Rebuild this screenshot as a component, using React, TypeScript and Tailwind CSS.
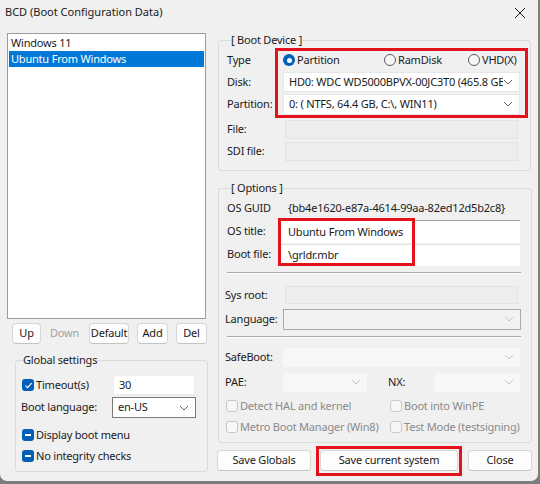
import React from 'react';

// BCD dialog (Windows 11 look)

const Chevron: React.FC<{ light?: boolean }> = ({ light }) => (
  <svg width="10" height="6" viewBox="0 0 10 6" className="shrink-0">
    <path d="M1 1 L5 5 L9 1" fill="none" stroke={light ? '#c4c4c4' : '#606060'} strokeWidth="1" />
  </svg>
);

const CheckBox: React.FC<{ state: 'checked' | 'mixed' | 'off' }> = ({ state }) => {
  if (state === 'off') {
    return <span className="w-[12px] h-[12px] rounded-[3px] border border-[#c8c8c8] bg-[#f7f7f7] shrink-0" />;
  }
  return (
    <span className="w-[12px] h-[12px] rounded-[3px] bg-[#005fb8] flex items-center justify-center shrink-0">
      {state === 'checked' ? (
        <svg width="9" height="9" viewBox="0 0 9 9">
          <path d="M1.5 4.6 L3.6 6.6 L7.6 2.2" fill="none" stroke="#fff" strokeWidth="1.2" />
        </svg>
      ) : (
        <span className="w-[6px] h-[1.5px] bg-white" />
      )}
    </span>
  );
};

const Radio: React.FC<{ on?: boolean; label: string; className?: string }> = ({ on, label, className }) => (
  <div className={`flex items-center gap-[2px] ${className ?? ''}`}>
    {on ? (
      <span className="w-[12px] h-[12px] rounded-full bg-[#005fb8] flex items-center justify-center">
        <span className="w-[5px] h-[5px] rounded-full bg-white" />
      </span>
    ) : (
      <span className="w-[12px] h-[12px] rounded-full border border-[#5c5c5c] bg-[#f6f6f6]" />
    )}
    <span>{label}</span>
  </div>
);

const Btn: React.FC<{ children: React.ReactNode; className?: string; disabled?: boolean }> = ({ children, className, disabled }) => (
  <div
    className={`h-[21px] flex items-center justify-center rounded-[4px] ${
      disabled ? 'text-[#a3a3a3]' : 'bg-[#fdfdfd] border border-[#d6d6d6] border-b-[#c4c4c4]'
    } ${className ?? ''}`}
  >
    {children}
  </div>
);

const Combo: React.FC<{ text?: string; className?: string; variant?: 'white' | 'dark' | 'disabled' | 'framed' }> = ({
  text,
  className,
  variant = 'white',
}) => {
  const look =
    variant === 'white'
      ? 'bg-white border border-[#e6e6e6]'
      : variant === 'dark'
      ? 'bg-white border border-[#7a7a7a]'
      : variant === 'framed'
      ? 'bg-[#f2f2f2] border border-[#a8a8a8]'
      : 'bg-[#f7f7f7]';
  return (
    <div className={`flex items-center pl-[5px] pr-[6px] overflow-hidden ${look} ${className ?? ''}`}>
      <span className="flex-1 whitespace-nowrap overflow-hidden">{text}</span>
      <Chevron light={variant === 'disabled' || variant === 'framed'} />
    </div>
  );
};

const DisabledEdit: React.FC<{ className?: string }> = ({ className }) => (
  <div className={`bg-[#ededed] border border-[#e3e3e3] ${className ?? ''}`} />
);

const Row: React.FC<{ label: string; children: React.ReactNode; className?: string }> = ({ label, children, className }) => (
  <div className={`flex items-center ${className ?? ''}`}>
    <span className="w-[56px] shrink-0">{label}</span>
    {children}
  </div>
);

export default function App() {
  return (
    <div
      className="w-[540px] h-[484px] bg-[#7d7d7d] text-[11px] tracking-[-0.2px] text-[#1a1a1a] overflow-hidden relative whitespace-nowrap"
      style={{ fontFamily: '"Noto Sans", "Open Sans", sans-serif' }}
    >
      <div className="w-[538px] h-[481px] bg-[#f0f0f0] rounded-b-[7px] flex flex-col">
        {/* title bar */}
        <div className="h-[25px] flex items-center justify-between pl-[5px] pr-[12px]">
          <span className="tracking-normal">BCD (Boot Configuration Data)</span>
          <svg width="12" height="12" viewBox="0 0 12 12">
            <path d="M1 1 L11 11 M11 1 L1 11" stroke="#1a1a1a" strokeWidth="1" />
          </svg>
        </div>

        <div className="flex pl-[7px]">
          {/* left column */}
          <div className="w-[201px] flex flex-col">
            <div className="mt-[8px] h-[286px] w-[199px] bg-white border border-[#9c9c9c] pt-[1px] px-[1px]">
              <div className="h-[16px] flex items-center pl-[2px]">Windows 11</div>
              <div className="h-[16px] flex items-center pl-[2px] bg-[#0078d7] text-white">Ubuntu From Windows</div>
            </div>
            <div className="mt-[4px] flex items-center pl-[5px]">
              <Btn className="w-[29px]">Up</Btn>
              <Btn className="w-[29px] ml-[9px]" disabled>
                Down
              </Btn>
              <Btn className="w-[40px] ml-[10px]">Default</Btn>
              <Btn className="w-[31px] ml-[8px]">Add</Btn>
              <Btn className="w-[31px] ml-[8px]">Del</Btn>
            </div>

            <fieldset className="mt-[8px] ml-[8px] w-[193px] h-[120px] border border-[#dadada] rounded-[3px] px-[6px]">
              <legend className="ml-[1px] leading-[16px]">Global settings</legend>
              <div className="mt-[7px] h-[20px] flex items-center">
                <div className="w-[91px] flex items-center gap-[2px]">
                  <CheckBox state="checked" />
                  <span>Timeout(s)</span>
                </div>
                <div className="w-[82px] h-[20px] bg-white border border-[#ececec] flex items-center pl-[5px]">30</div>
              </div>
              <div className="mt-[2px] h-[21px] flex items-center">
                <span className="w-[91px] -ml-[1px]">Boot language:</span>
                <Combo text="en-US" variant="dark" className="w-[84px] h-[21px]" />
              </div>
              <div className="mt-[7px] h-[20px] flex items-center gap-[2px]">
                <CheckBox state="mixed" />
                <span>Display boot menu</span>
              </div>
              <div className="mt-[1px] h-[20px] flex items-center gap-[2px]">
                <CheckBox state="mixed" />
                <span>No integrity checks</span>
              </div>
            </fieldset>
          </div>

          {/* right column */}
          <div className="ml-[9px] w-[315px] flex flex-col pt-[7px]">
            <fieldset className="ml-[1px] w-[313px] h-[139px] border border-[#dadada] rounded-[3px] pl-[8px] pr-[10px]">
              <legend className="ml-[4px] leading-[16px]">[ Boot Device ]</legend>
              <Row label="Type" className="h-[22px] mt-[1px]">
                <Radio on label="Partition" className="w-[101px]" />
                <Radio label="RamDisk" className="w-[84px]" />
                <Radio label="VHD(X)" />
              </Row>
              <Row label="Disk:" className="h-[22px]">
                <Combo text="HD0: WDC WD5000BPVX-00JC3T0 (465.8 GB, (" className="w-[237px] h-[20px]" />
              </Row>
              <Row label="Partition:" className="h-[22px]">
                <Combo text="0: ( NTFS,  64.4 GB, C:\, WIN11)" className="w-[237px] h-[21px]" />
              </Row>
              <Row label="File:" className="h-[22px] mt-[3px]">
                <DisabledEdit className="ml-[2px] w-[233px] h-[19px]" />
              </Row>
              <Row label="SDI file:" className="h-[22px]">
                <DisabledEdit className="ml-[2px] w-[233px] h-[19px]" />
              </Row>
            </fieldset>

            <fieldset className="mt-[9px] ml-[1px] w-[313px] h-[263px] border border-[#dadada] rounded-[3px] pl-[8px] pr-[10px]">
              <legend className="ml-[4px] leading-[16px]">[ Options ]</legend>
              <Row label="OS GUID" className="h-[22px] mt-[1px]">
                <span className="ml-[5px]">{'{bb4e1620-e87a-4614-99aa-82ed12d5b2c8}'}</span>
              </Row>
              <Row label="OS title:" className="h-[23px] mt-[1px]">
                <div className="-ml-[3px] w-[240px] h-[23px] bg-white border-t border-[#a0a0a0] flex items-center pl-[8px]">
                  Ubuntu From Windows
                </div>
              </Row>
              <Row label="Boot file:" className="h-[23px]">
                <div className="-ml-[3px] w-[240px] h-[22px] bg-white border-t border-[#e4e4e4] flex items-center pl-[8px]">
                  \grldr.mbr
                </div>
              </Row>
              <div className="mt-[6px] h-[2px] border-t border-[#a9a9a9] border-b border-b-white" />
              <Row label="Sys root:" className="h-[22px] mt-[10px] -ml-[2px]">
                <DisabledEdit className="ml-[4px] w-[233px] h-[18px]" />
              </Row>
              <Row label="Language:" className="h-[22px] mt-[2px] -ml-[2px]">
                <Combo variant="framed" className="ml-[2px] w-[238px] h-[21px]" />
              </Row>
              <div className="mt-[6px] h-[2px] border-t border-[#a9a9a9] border-b border-b-white" />
              <Row label="SafeBoot:" className="h-[22px] mt-[8px] -ml-[2px]">
                <Combo variant="disabled" className="ml-[2px] w-[237px] h-[19px]" />
              </Row>
              <Row label="PAE:" className="h-[22px] mt-[3px] -ml-[2px]">
                <Combo variant="disabled" className="ml-[2px] w-[84px] h-[19px]" />
                <span className="ml-[21px] w-[46px]">NX:</span>
                <Combo variant="disabled" className="w-[86px] h-[19px]" />
              </Row>
              <div className="mt-[3px] h-[20px] flex items-center text-[#8a8a8a] -ml-[1px]">
                <div className="w-[164px] flex items-center gap-[2px]">
                  <CheckBox state="off" />
                  <span>Detect HAL and kernel</span>
                </div>
                <div className="flex items-center gap-[2px]">
                  <CheckBox state="off" />
                  <span>Boot into WinPE</span>
                </div>
              </div>
              <div className="mt-[1px] h-[20px] flex items-center text-[#8a8a8a] -ml-[1px]">
                <div className="w-[164px] flex items-center gap-[2px]">
                  <CheckBox state="off" />
                  <span>Metro Boot Manager (Win8)</span>
                </div>
                <div className="flex items-center gap-[2px]">
                  <CheckBox state="off" />
                  <span>Test Mode (testsigning)</span>
                </div>
              </div>
            </fieldset>

            <div className="mt-[7px] flex items-center">
              <Btn className="w-[94px]">Save Globals</Btn>
              <Btn className="w-[138px] ml-[9px]">Save current system</Btn>
              <Btn className="w-[64px] ml-[10px]">Close</Btn>
            </div>
          </div>
        </div>
      </div>

      {/* red annotation boxes drawn over the dialog */}
      <div className="absolute left-[275px] top-[48px] w-[253px] h-[70px] border-[3px] border-[#e3121c] pointer-events-none" />
      <div className="absolute left-[278px] top-[218px] w-[137px] h-[48px] border-[3px] border-[#e3121c] pointer-events-none" />
      <div className="absolute left-[316px] top-[446px] w-[146px] h-[30px] border-[3px] border-[#e3121c] pointer-events-none" />
    </div>
  );
}
